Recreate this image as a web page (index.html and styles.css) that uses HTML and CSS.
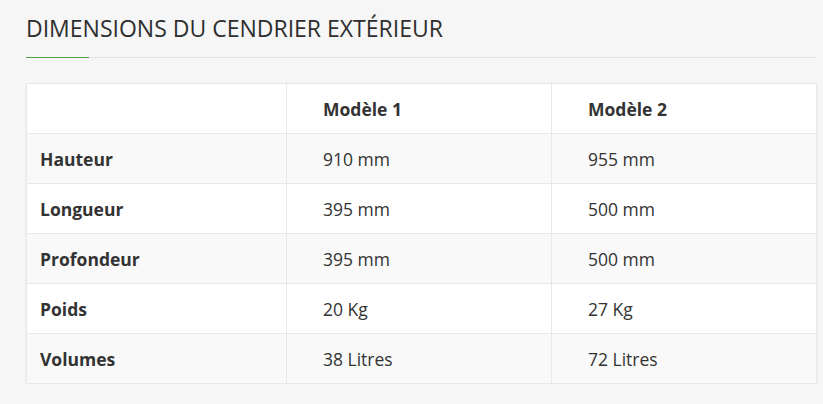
FILE: index.html
```html
<!DOCTYPE html>
<html lang="fr">
<head>
<meta charset="utf-8">
<title>Dimensions du cendrier extérieur</title>
<link rel="stylesheet" href="styles.css">
</head>
<body>
<section class="block">
  <h2 class="title">DIMENSIONS DU CENDRIER EXTÉRIEUR</h2>
  <table class="dims">
    <colgroup>
      <col class="c1"><col class="c2"><col class="c3">
    </colgroup>
    <thead>
      <tr><th class="label"></th><th>Modèle 1</th><th>Modèle 2</th></tr>
    </thead>
    <tbody>
      <tr><th class="label">Hauteur</th><td>910 mm</td><td>955 mm</td></tr>
      <tr><th class="label">Longueur</th><td>395 mm</td><td>500 mm</td></tr>
      <tr><th class="label">Profondeur</th><td>395 mm</td><td>500 mm</td></tr>
      <tr><th class="label">Poids</th><td>20 Kg</td><td>27 Kg</td></tr>
      <tr><th class="label">Volumes</th><td>38 Litres</td><td>72 Litres</td></tr>
    </tbody>
  </table>
</section>
</body>
</html>
```
FILE: styles.css
```css
html, body {
  margin: 0;
  padding: 0;
  background: #f6f6f6;
}
body {
  font-family: "Open Sans", "Liberation Sans", sans-serif;
  color: #333;
}
.block {
  width: 790px;
  padding: 13px 0 0 26px;
}
.title {
  position: relative;
  margin: 0;
  font-size: 23px;
  line-height: 30px;
  font-weight: 400;
  color: #2e2e2e;
  padding-bottom: 14px;
  border-bottom: 1px solid #e3e3e3;
}
.title::after {
  content: "";
  position: absolute;
  left: 0;
  bottom: -1px;
  width: 63px;
  height: 1px;
  background: #4fa446;
}
.dims {
  margin-top: 25px;
  width: 790px;
  table-layout: fixed;
  border-collapse: collapse;
  background: #fff;
  border: 1px solid #dcdcdc;
  box-shadow: 0 1px 2px rgba(0,0,0,0.08);
  font-size: 17.5px;
}
.c1 { width: 260px; }
.c2 { width: 265px; }
.c3 { width: 265px; }
.dims tr { height: 50px; }
.dims th, .dims td {
  border: 1px solid #e8e8e8;
  padding: 0 0 0 36px;
  text-align: left;
  vertical-align: middle;
  line-height: 24px;
}
.dims th { font-weight: 700; }
.dims td { font-weight: 400; }
.dims .label { padding-left: 13px; }
.dims tbody tr:nth-child(odd) { background: #f9f9f9; }
```
